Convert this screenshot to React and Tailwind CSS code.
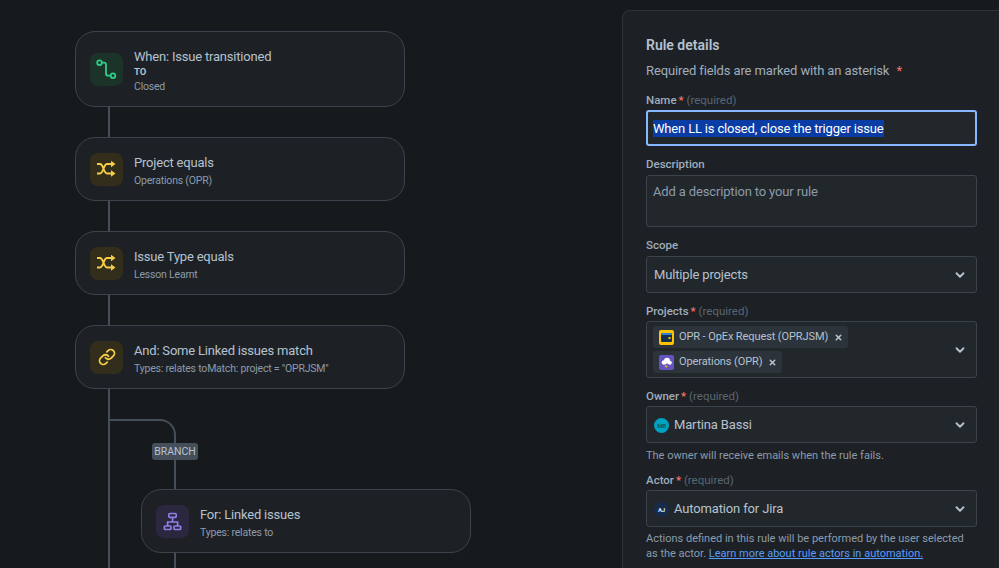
import React from "react";
import { ChevronDown, Link as LinkIcon, X } from "lucide-react";

const FONT = "font-['Roboto','Noto_Sans',sans-serif]";

const PathIcon = () => (
    <svg width="33" height="33" viewBox="0 0 33 33" fill="none" stroke="#2ECC8A" strokeWidth="1.8">
        <circle cx="9.5" cy="9.7" r="2.3" />
        <circle cx="23" cy="22.7" r="2.3" />
        <path d="M12 9.7h2c1.4 0 2 .8 2 2.2v8.5c0 1.4.8 2.3 2.2 2.3h2.5" />
    </svg>
);

const ShuffleIcon = () => (
    <svg width="33" height="33" viewBox="0 0 33 33" fill="none">
        <path d="M7 11h3c3.500 0 3.500 9.500 7 9.500h4.500M7 20.500h3c3.500 0 3.500-9.500 7-9.500h4.500" stroke="#F5CD47" strokeWidth="1.900" />
        <path d="M21 7.800l4.500 3.200-4.500 3.200zM21 17.300l4.500 3.200-4.500 3.200z" fill="#F5CD47" />
    </svg>
);

const HierarchyIcon = () => (
    <svg width="33" height="33" viewBox="0 0 33 33" fill="none" stroke="#8F7EE7" strokeWidth="1.700">
        <rect x="12.800" y="8.500" width="7.400" height="3.800" rx="1" />
        <rect x="8.300" y="21" width="6.700" height="3.500" rx="1" />
        <rect x="18" y="21" width="6.700" height="3.500" rx="1" />
        <path d="M16.500 12.300v4.700M11.600 21v-4h10v4" />
    </svg>
);

const FlowCard = ({ tile, icon, title, subtitle, badge, tall = false }) => (
    <div
        className={`flex w-[330px] items-center gap-[11px] rounded-[20px] border border-[#3B444C] bg-[#1D2125] pl-[14px] ${
            tall ? "h-[76px]" : "h-[64px]"
        }`}
    >
        <div className={`flex h-[33px] w-[33px] shrink-0 items-center justify-center rounded-lg ${tile}`}>
            {icon}
        </div>
        <div className="flex flex-col pt-[3px]">
            <span className="text-[13px] leading-[18px] tracking-[-0.2px] text-[#B6C2CF]">{title}</span>
            {badge && <span className="text-[9.500px] leading-[12px] font-bold text-[#B6C2CF]">{badge}</span>}
            <span className="mt-[2px] text-[10.500px] leading-[14px] tracking-[-0.2px] text-[#8C9BAB]">{subtitle}</span>
        </div>
    </div>
);

const Connector = () => <div className="ml-[33px] h-[30px] w-[2px] bg-[#454F59]" />;

const Label = ({ children, required = false }) => (
    <div className="text-[11.500px] leading-[16px] font-medium text-[#9FADBC]">
        {children}
        {required && (
            <>
                <span className="ml-[2px] text-[#F87168]">*</span>
                <span className="font-normal text-[#596773]"> (required)</span>
            </>
        )}
    </div>
);

const Select = ({ children }) => (
    <div className="flex h-[37px] items-center justify-between rounded-[3px] border border-[#3B444C] bg-[#22272B] pr-[9px] pl-[7px]">
        <div className="flex items-center gap-[5px] pt-px text-[13px] tracking-[-0.15px] text-[#B6C2CF]">{children}</div>
        <ChevronDown size={14} strokeWidth={3.2} className="text-[#B6C2CF]" />
    </div>
);

const Chip = ({ icon, text }) => (
    <div className="flex h-[22px] w-fit items-center rounded-[3px] bg-[#2C333A] pr-[5px] pl-[6px] text-[11px] tracking-[-0.1px] text-[#B6C2CF]">
        {icon}
        <span className="ml-[5px] pt-px">{text}</span>
        <X size={9} strokeWidth={4} className="ml-[6px] text-[#B6C2CF]" />
    </div>
);

const OprIcon = () => (
    <svg width="15" height="15" viewBox="0 0 15 15">
        <rect width="15" height="15" rx="2" fill="#FFC400" />
        <rect x="2" y="3" width="11" height="9" rx="1" fill="#14304F" />
        <rect x="2" y="3" width="11" height="2" fill="#2F7FD6" />
        <rect x="9.500" y="7" width="2" height="2" fill="#FFC400" />
    </svg>
);

const OperationsIcon = () => (
    <svg width="15" height="15" viewBox="0 0 15 15">
        <rect width="15" height="15" rx="2" fill="#6554C0" />
        <circle cx="5" cy="7.500" r="2.300" fill="#fff" />
        <circle cx="8" cy="5.800" r="3" fill="#fff" />
        <circle cx="10.800" cy="7.800" r="2" fill="#fff" />
        <path d="M7 9.500L5.500 12.500 7.500 11.500 7 13.500 9 10.500 7.500 11z" fill="#FFC400" />
    </svg>
);

const App = () => {
    return (
        <div className={`flex h-[568px] w-[999px] overflow-hidden bg-[#161A1D] ${FONT}`}>
            {/* flow canvas */}
            <div className="flex w-[622px] shrink-0 flex-col pt-[31px] pl-[75px]">
                <FlowCard
                    tall
                    tile="bg-[#1C3329]"
                    icon={<PathIcon />}
                    title="When: Issue transitioned"
                    badge="TO"
                    subtitle="Closed"
                />
                <Connector />
                <FlowCard
                    tile="bg-[#332E1B]"
                    icon={<ShuffleIcon />}
                    title="Project equals"
                    subtitle="Operations (OPR)"
                />
                <Connector />
                <FlowCard
                    tile="bg-[#332E1B]"
                    icon={<ShuffleIcon />}
                    title="Issue Type equals"
                    subtitle="Lesson Learnt"
                />
                <Connector />
                <FlowCard
                    tile="bg-[#332E1B]"
                    icon={<LinkIcon size={18} strokeWidth={2.4} className="text-[#F5CD47]" />}
                    title="And: Some Linked issues match"
                    subtitle={'Types: relates toMatch: project = "OPRJSM"'}
                />
                <div className="flex flex-1">
                    <div className="ml-[33px] w-[2px] bg-[#454F59]" />
                    <div className="flex flex-col">
                        <div className="relative mt-[30px] h-[70px] w-[66px] rounded-tr-[16px] border-t-2 border-r-2 border-[#454F59]">
                            <span className="absolute top-[22px] -right-[24px] flex h-[17px] w-[46px] items-center justify-center rounded-[3px] bg-[#454F59] text-[10.500px] text-[#B6C2CF]">
                                BRANCH
                            </span>
                        </div>
                        <div className="ml-[31px]">
                            <FlowCard
                                tile="bg-[#2B273F]"
                                icon={<HierarchyIcon />}
                                title="For: Linked issues"
                                subtitle="Types: relates to"
                            />
                        </div>
                        <div className="ml-[64px] w-[2px] flex-1 bg-[#454F59]" />
                    </div>
                </div>
            </div>

            {/* rule details panel */}
            <div className="mt-[10px] flex-1 rounded-tl-lg border-t border-l border-[#2C333A] bg-[#1D2125] pt-[25px] pr-[22px] pl-[23px]">
                <div className="text-[14px] leading-[18px] font-semibold text-[#B6C2CF]">Rule details</div>
                <div className="mt-[8px] text-[13px] leading-[18px] tracking-[-0.12px] text-[#9FADBC]">
                    Required fields are marked with an asterisk <span className="ml-[4px] text-[#F87168]">*</span>
                </div>
                <div className="mt-[12px]">
                    <Label required>Name</Label>
                </div>
                <div className="mt-[2px] flex h-[36px] items-center rounded-[3px] border-2 border-[#85B8FF] bg-[#22272B] pl-[5px]">
                    <span className="bg-[#0A3CA6] text-[13px] leading-[17px] tracking-[-0.17px] text-white">
                        When LL is closed, close the trigger issue
                    </span>
                </div>
                <div className="mt-[10px]">
                    <Label>Description</Label>
                </div>
                <div className="mt-[3px] h-[52px] rounded-[3px] border border-[#3B444C] bg-[#22272B] pt-[6px] pl-[6px] text-[13px] tracking-[-0.15px] text-[#8C9BAB]">
                    Add a description to your rule
                </div>
                <div className="mt-[10px]">
                    <Label>Scope</Label>
                </div>
                <div className="mt-[3px]">
                    <Select>Multiple projects</Select>
                </div>
                <div className="mt-[10px]">
                    <Label required>Projects</Label>
                </div>
                <div className="mt-[2px] flex h-[57px] items-center justify-between rounded-[3px] border border-[#3B444C] bg-[#22272B] pr-[9px] pl-[6px]">
                    <div className="flex flex-col gap-[3px]">
                        <Chip icon={<OprIcon />} text="OPR - OpEx Request (OPRJSM)" />
                        <Chip icon={<OperationsIcon />} text="Operations (OPR)" />
                    </div>
                    <ChevronDown size={14} strokeWidth={3.2} className="text-[#B6C2CF]" />
                </div>
                <div className="mt-[10px]">
                    <Label required>Owner</Label>
                </div>
                <div className="mt-[2px]">
                    <Select>
                        <span className="flex h-[15px] w-[15px] items-center justify-center rounded-full bg-[#00A3BF] text-[6px] font-medium text-[#164555]">
                            MB
                        </span>
                        Martina Bassi
                    </Select>
                </div>
                <div className="mt-[5px] text-[11px] leading-[16px] text-[#8C9BAB]">
                    The owner will receive emails when the rule fails.
                </div>
                <div className="mt-[8px]">
                    <Label required>Actor</Label>
                </div>
                <div className="mt-[2px]">
                    <Select>
                        <span className="flex h-[15px] w-[15px] items-center justify-center rounded-full bg-[#172B4D] text-[6px] font-bold text-[#DEEBFF]">
                            AJ
                        </span>
                        Automation for Jira
                    </Select>
                </div>
                <div className="mt-[4px] text-[11px] leading-[15px] text-[#8C9BAB]">
                    Actions defined in this rule will be performed by the user selected
                    <br />
                    as the actor. <span className="text-[#579DFF] underline">Learn more about rule actors in automation.</span>
                </div>
            </div>
        </div>
    );
};

export default App;
